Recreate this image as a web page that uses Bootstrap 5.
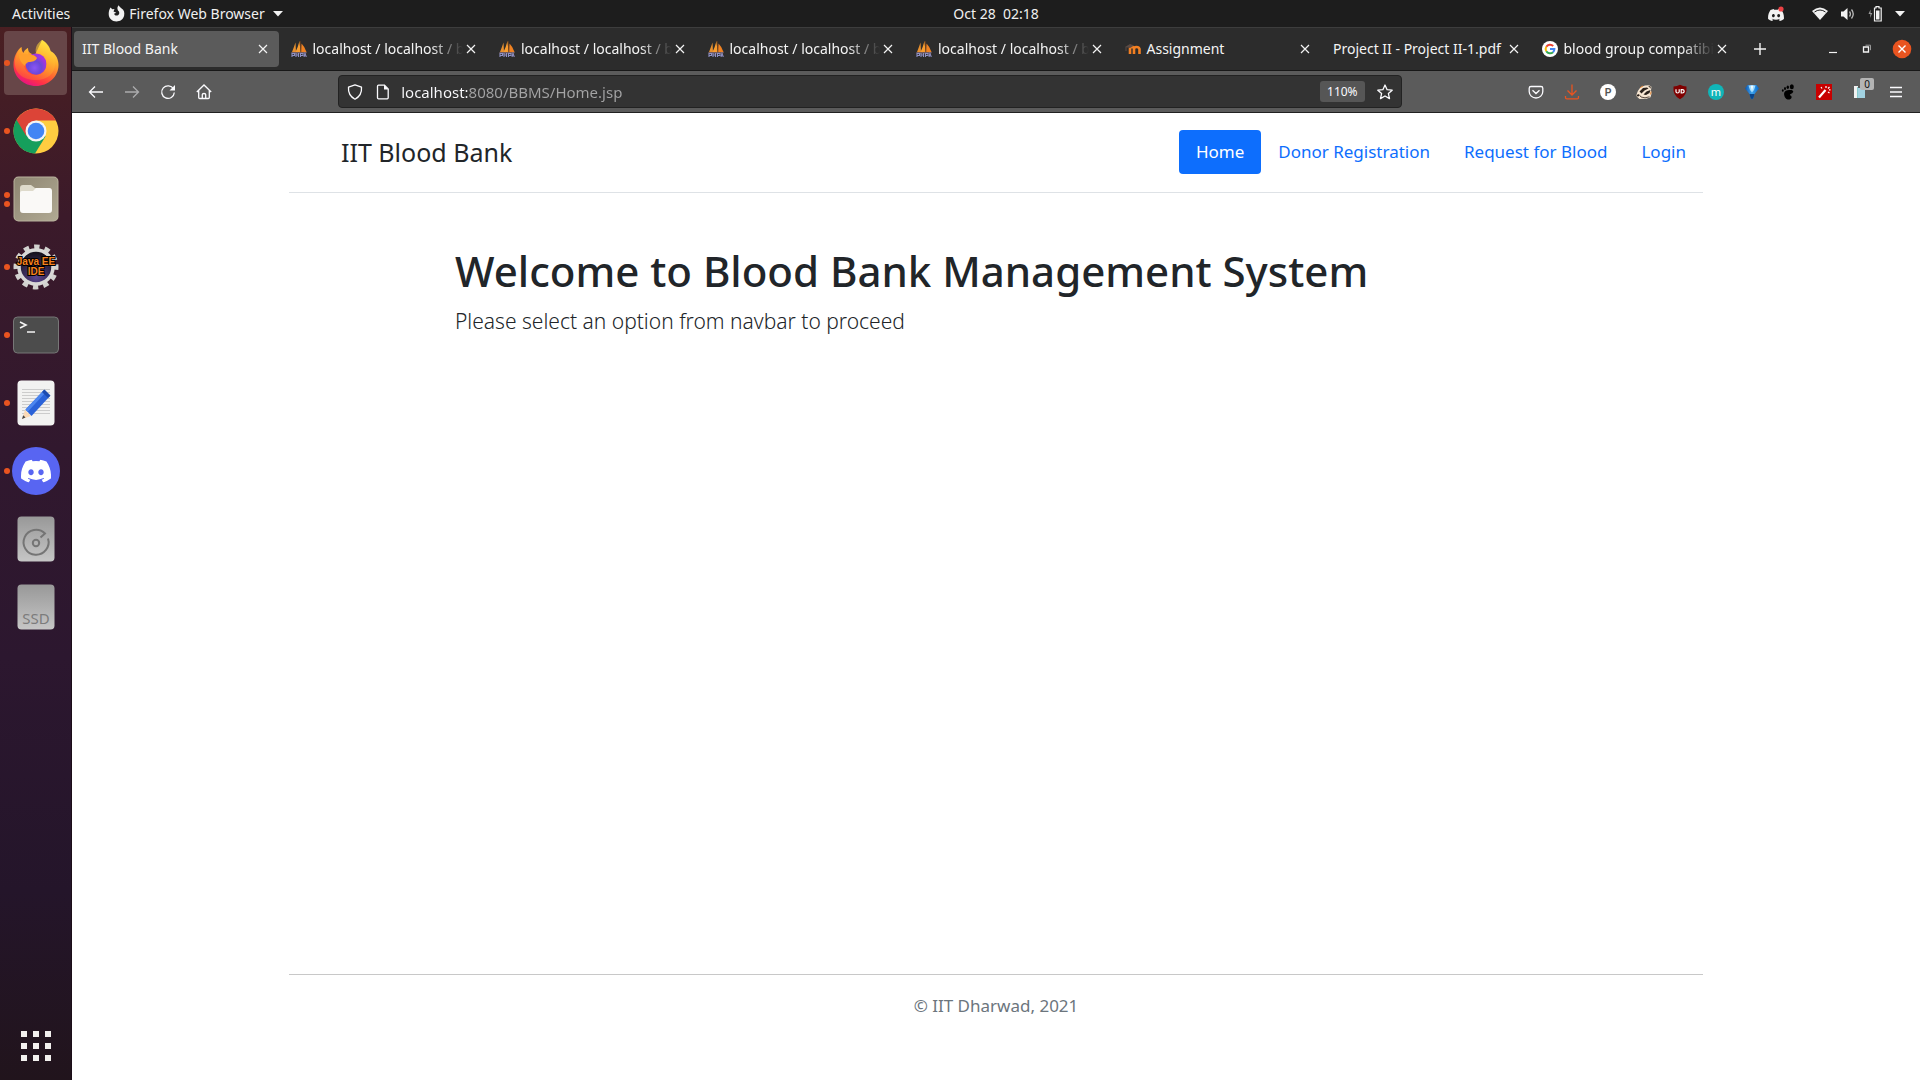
<!DOCTYPE html>
<html lang="en">
<head>
<meta charset="utf-8">
<meta name="viewport" content="width=device-width, initial-scale=1">
<title>IIT Blood Bank</title>
<link href="https://cdn.jsdelivr.net/npm/bootstrap@5.3.0/dist/css/bootstrap.min.css" rel="stylesheet">
<style>
:root { --ui-font: "Noto Sans", "Open Sans", sans-serif; }
body { font-family: var(--ui-font); color: #212529; background: #fff; }
button { font-family: inherit; }
svg { display: block; flex: none; }
.plain { background: none; border: 0; padding: 0; color: inherit; }

/* system bar */
.sysbar { height: 27px; background: #1d1d1d; color: #f0f0f0; font-size: 14px; line-height: 20px; }
.sys-left { flex: 1 0 87px; padding-left: 12px; gap: 38px; }
.sys-right { flex: 1 0 0; padding-right: 15px; gap: 13px; }
.tray-app { margin-right: 14px; }

/* dock */
.dock { width: 72px; padding: 4px 4px 2px; gap: 4px; border-right: 1px solid #1b0d18;
  background: linear-gradient(#4a1f22 0, #3b1a2a 18%, #31182e 40%, #2c172f 60%, #24152a 82%, #21141c 100%); }
.dock-item { height: 64px; border-radius: 4px; position: relative; display: flex; align-items: center; justify-content: center; }
.dock-item.current { background: #674648; }
.run-dots { position: absolute; left: 0; top: 0; height: 100%; display: flex; flex-direction: column; justify-content: center; gap: 3px; }
.run-dots i { width: 6px; height: 6px; border-radius: 50%; background: #e95420; }

/* browser chrome */
.tabstrip { height: 44px; background: #2c2c2c; border-top: 1px solid #3d3d3d; border-bottom: 1px solid #181818; color: #f4f4f4; }
.tab-box { flex: 1 1 0; min-width: 0; height: 36px; margin: 3px 2px 0; padding: 0 10px 0 8px; border-radius: 4px; }
.tab-box.current { background: #5b5b5b; }
.tab-name { flex: 1 1 0; min-width: 0; gap: 6px; font-size: 14px; line-height: 20px; text-align: left; }
.tab-name span { white-space: nowrap; flex: 1 1 0; }
.fades { -webkit-mask-image: linear-gradient(to left, transparent 2px, #000 34px); mask-image: linear-gradient(to left, transparent 2px, #000 34px); }
.win-tools { width: 180px; padding: 0 8px 0 13px; }
.toolbar { height: 42px; background: #5b5b5b; border-bottom: 1px solid #202020; color: #fbfbfe; padding: 0 6px; }
.tool { width: 36px; height: 36px; display: flex; align-items: center; justify-content: center; }
.spring { flex: 1 1 0; }
.address { flex: 9 1 0; height: 33px; background: #333; border: 1px solid #222; border-radius: 4px; padding: 0 8px; }
.address input { flex: 1; min-width: 0; border: 0; outline: 0; padding: 0; margin-left: 11px; font: 15px/20px var(--ui-font);
  background: linear-gradient(90deg, #fbfbfe 67px, #a4a4a5 67px); -webkit-background-clip: text; background-clip: text;
  -webkit-text-fill-color: transparent; }
.page-info { margin-left: 13px; }
.zoom-chip { width: 45px; height: 21px; border-radius: 3px; background: #565656; font-size: 12px; line-height: 21px; text-align: center; margin-right: 12px; }
.count-tag { position: absolute; left: 18px; top: 4px; width: 14px; height: 12px; background: #b4b4b4; color: #111; font-size: 10px; line-height: 12px; border-radius: 2px; text-align: center; }

/* page */
.site { width: 100%; max-width: 1414px; font-size: 17px; line-height: 26px; }
.site-head { padding: 17px 0 18px; border-bottom: 1px solid #dee2e6; }
.brand { font-size: 25px; line-height: 32px; margin-left: 52px; }
.site-head .nav-link { padding: 9px 17px; border-radius: 4px; }
.hero { padding: 51px 166px 0; }
.hero h1 { font-size: 42px; line-height: 53px; margin-bottom: 8px; font-weight: 500; }
.hero p { font-size: 21px; line-height: 33px; font-weight: 300; }
.site-foot { border-top: 1px solid #c8c8c8; padding-top: 18px; height: 106px; }
</style>
<script src="https://cdn.jsdelivr.net/npm/bootstrap@5.3.0/dist/js/bootstrap.bundle.min.js"></script>
</head>
<body>
<svg width="0" height="0" class="position-absolute" aria-hidden="true">
  <defs>
    <symbol id="x" viewBox="0 0 12 12"><path d="M2 2l8 8M10 2l-8 8" stroke="currentColor" stroke-width="1.2" fill="none"/></symbol>
    <symbol id="pma" viewBox="0 0 16 16">
      <path d="M1 11Q3 6 4.500 1.500L5 11z" fill="#e8902e"/><path d="M4.500 11Q7 6 8.500 0L9.500 11z" fill="#f89c2e"/><path d="M10.500 2.500Q14 6 15.500 11L10 11z" fill="#f08222"/><path d="M9 0l1 11" stroke="#8a4a18" stroke-width=".7"/>
      <path d="M0 11.200h16l-1 1.200H1z" fill="#8a6d70"/><path d="M1 16v-3.500h2.500v2H1M5 12v4M5 14h2.500M7.500 12v4M9.500 16v-3.500h2.500v2H9.500M13 16l1-3.500 1.300 3.500" stroke="#8f90c4" stroke-width="1.100" fill="none"/>
    </symbol>
    <linearGradient id="ffBody" x1=".8" y1="0" x2=".3" y2="1"><stop offset="0" stop-color="#fff44f"/><stop offset=".35" stop-color="#ffb02e"/><stop offset=".6" stop-color="#ff6a30"/><stop offset=".82" stop-color="#ff3048"/><stop offset="1" stop-color="#e3108a"/></linearGradient>
    <linearGradient id="ffSwirl" x1=".6" y1="0" x2=".2" y2="1"><stop offset="0" stop-color="#ffe03a"/><stop offset=".6" stop-color="#ffa12b"/><stop offset="1" stop-color="#ff5a36"/></linearGradient>
    <radialGradient id="ffGlobe" cx=".4" cy=".65" r=".7"><stop offset="0" stop-color="#8a55f5"/><stop offset=".5" stop-color="#6a48d8"/><stop offset="1" stop-color="#b030e0"/></radialGradient>
    <linearGradient id="filesBg" x1="0" y1="0" x2="1" y2="1"><stop offset="0" stop-color="#8e8672"/><stop offset="1" stop-color="#b0a993"/></linearGradient>
    <linearGradient id="driveBg" x1="0" y1="0" x2="0" y2="1"><stop offset="0" stop-color="#989898"/><stop offset="1" stop-color="#c6c6c6"/></linearGradient>
    <radialGradient id="eclipse" cx=".5" cy=".8" r=".7"><stop offset="0" stop-color="#5a4590"/><stop offset="1" stop-color="#17131f"/></radialGradient>
    <linearGradient id="gem" x1="0" y1="0" x2="1" y2="0"><stop offset="0" stop-color="#0b55b0"/><stop offset=".5" stop-color="#3fa4ee"/><stop offset="1" stop-color="#0767c9"/></linearGradient>
    <symbol id="discordFace" viewBox="0 0 127 96"><path fill="currentColor" fill-rule="evenodd" d="M107.700 8.070A105.150 105.150 0 0 0 81.470 0a72.060 72.060 0 0 0-3.360 6.830 97.680 97.680 0 0 0-29.110 0A72.370 72.370 0 0 0 45.640 0a105.890 105.890 0 0 0-26.250 8.090C2.790 32.650-1.710 56.600.54 80.210a105.730 105.730 0 0 0 32.170 16.150 77.700 77.700 0 0 0 6.890-11.110 68.420 68.420 0 0 1-10.850-5.180c.91-.66 1.800-1.340 2.660-2a75.570 75.570 0 0 0 64.320 0c.87.710 1.760 1.390 2.660 2a68.680 68.680 0 0 1-10.870 5.190 77 77 0 0 0 6.890 11.100 105.250 105.250 0 0 0 32.190-16.140c2.640-27.380-4.510-51.110-18.900-72.150zM42.450 65.690C36.180 65.690 31 60 31 53s5-12.740 11.430-12.740S54 46 53.890 53s-5.050 12.690-11.440 12.690zm42.240 0C78.410 65.690 73.250 60 73.250 53s5-12.740 11.440-12.740S96.230 46 96.120 53s-5.040 12.690-11.430 12.690z"/></symbol>
  </defs>
</svg>

<div class="d-flex flex-column min-vh-100">
  <header class="sysbar d-flex align-items-center">
    <div class="sys-left d-flex align-items-center">
      <button class="plain">Activities</button>
      <button class="plain d-flex align-items-center">
        <svg width="17" height="17" viewBox="0 0 17 17" class="me-1"><path fill="#f2f2f2" d="M2.500 2.500l1.800 1.800L6.500 4 5.500 6.500 8.300 7.800 6 8.700c.8 1.800 2.500 2.300 4 1.500 1.800-1 1.700-3.600 0-4.700C9 3.600 9.200 1.800 10.700.3c.6 1.600 1.800 2.200 2.900 3.300 2.500 1.200 3.200 4.500 2.500 7.200C15.200 14.500 12 16.500 8.500 16.500 4 16.500.7 13.200.7 9c0-2.500.6-4.800 1.800-6.500z"/></svg>
        <span>Firefox Web Browser</span>
        <svg width="10" height="6" viewBox="0 0 10 6" class="ms-2"><path d="M0 0h10L5 5.500z" fill="#f2f2f2"/></svg>
      </button>
    </div>
    <button class="plain">Oct 28 &nbsp;02:18</button>
    <div class="sys-right d-flex align-items-center justify-content-end">
      <svg width="18" height="16" viewBox="0 0 18 16" color="#f2f2f2" class="tray-app"><use href="#discordFace" x="1" y="3" width="16" height="12"/><circle cx="14" cy="3" r="2.600" fill="#ed4245"/></svg>
      <svg width="16" height="14" viewBox="0 0 16 14"><path d="M0 4Q8-3 16 4L8 13z" fill="#f2f2f2"/><path d="M2.500 5Q8 1 13.500 5" stroke="#1d1d1d" stroke-width="1" fill="none"/></svg>
      <svg width="14" height="14" viewBox="0 0 14 14"><path d="M0 4.500h2.500L6.500 1v12L2.500 9.500H0z" fill="#f2f2f2"/><path d="M8.500 4.500q1.800 2.500 0 5M10.500 2.500q3.500 4.500 0 9" stroke="#bbb" stroke-width="1.300" fill="none"/></svg>
      <svg width="14" height="16" viewBox="0 0 14 16"><path d="M2.500 3.500L.5 8h2L2 12l2.300-5H2.500z" fill="#999"/><path d="M6.500 2H8V.7h3V2h2.200v13H6.500z" fill="none" stroke="#f2f2f2" stroke-width="1.200"/><path d="M8 4.500h3.500v9H8z" fill="#f2f2f2"/></svg>
      <svg width="10" height="6" viewBox="0 0 10 6"><path d="M0 0h10L5 5.500z" fill="#f2f2f2"/></svg>
    </div>
  </header>

  <div class="d-flex flex-grow-1">
    <nav class="dock d-flex flex-column flex-shrink-0" aria-label="Dock">
      <button class="plain dock-item current" aria-label="Firefox"><span class="run-dots"><i></i></span>
        <svg width="46" height="46" viewBox="0 0 46 46"><path fill="url(#ffBody)" d="M29 0c5 3 8 8 8.500 11 6 3 8 9 8 14C45.500 37 35 46 23 46S.5 37 .5 25C.5 17 4 10 8.500 7c0 3 1 5 2 6 1-3 3-4 4.500-5 0 3 1 5 4 6l2 3z"/><circle cx="23" cy="24" r="10.500" fill="url(#ffGlobe)"/><path fill="url(#ffSwirl)" d="M29 0c-6 4-7 9-6 13 5 0 10 3 11 6l-2-1c4 8-1 17-9 17-7 0-12-5-12-11 3-1 7-1 10-3l3-2c-3-2-6-1-8-3-1-2-1-5-1-8-2 1-4 3-4.500 5-2-1-2.500-4-2-6-4 4-6 9-6.500 14C1 33 10 40 23 40c12 0 19-7 19-16 0-5-2-8-4.500-13C37 6 33 2 29 0z" opacity=".55"/><circle cx="23.500" cy="25" r="9.500" fill="url(#ffGlobe)"/><path d="M6 15c5-2 9 0 13 0 3 0 4 2 5 3-1 3-5 4-8 4-2 0-4 2-4 4C8 23 6 19 6 15z" fill="#ffa02c"/></svg></button>
      <button class="plain dock-item" aria-label="Chrome"><span class="run-dots"><i></i></span>
        <svg width="46" height="46" viewBox="0 0 46 46"><circle cx="23" cy="23" r="22.500" fill="#ffcd41"/><path d="M23 23L3.500 11.750A22.500 22.500 0 0 0 22 45.500L32.500 28.500z" fill="#159f5c"/><path d="M23 12.500h19.900A22.500 22.500 0 0 0 3.500 11.750L13.500 28.500 13 20z" fill="#dc4437"/><circle cx="23" cy="23" r="10.500" fill="#f4f4f4"/><circle cx="23" cy="23" r="8.300" fill="#4285f4"/></svg></button>
      <button class="plain dock-item" aria-label="Files"><span class="run-dots"><i></i><i></i></span>
        <svg width="46" height="46" viewBox="0 0 46 46"><rect x=".5" y=".5" width="45" height="45" rx="5" fill="#b9b29d"/><rect x="1.500" y="1.500" width="43" height="43" rx="4" fill="url(#filesBg)"/><path d="M7 12q0-3 3-3h8l4 3h14q2 0 2 3v8H7z" fill="#dedacb"/><path d="M7 17q0-2 2-2h11l3-3h13q3 0 3 3v19q0 3-3 3H10q-3 0-3-3z" fill="#faf9f7"/></svg></button>
      <button class="plain dock-item" aria-label="Eclipse"><span class="run-dots"><i></i></span>
        <svg width="48" height="46" viewBox="0 0 48 46"><circle cx="24" cy="23" r="20" fill="none" stroke="#d2d2cf" stroke-width="5" stroke-dasharray="5.240 5.240" transform="rotate(-7 24 23)"/><circle cx="24" cy="23" r="17" fill="url(#eclipse)" stroke="#d8d8d6" stroke-width="3.500"/><g font-family="Liberation Sans, sans-serif" font-weight="700" font-size="10" text-anchor="middle" fill="#f5821f" stroke="#000" stroke-width="2" paint-order="stroke"><text x="24" y="21">Java EE</text><text x="24" y="31">IDE</text></g></svg></button>
      <button class="plain dock-item" aria-label="Terminal"><span class="run-dots"><i></i></span>
        <svg width="46" height="38" viewBox="0 0 46 38"><rect x=".5" y="1" width="45" height="36" rx="4" fill="#4c4c4c" stroke="#777"/><path d="M7 6l6 3-6 3M14 16h8" stroke="#f4f4f4" stroke-width="1.600" fill="none"/></svg></button>
      <button class="plain dock-item" aria-label="Text editor"><span class="run-dots"><i></i></span>
        <svg width="38" height="46" viewBox="0 0 38 46"><rect x=".5" y=".5" width="37" height="45" rx="4" fill="#f2f2f1"/><path d="M5 9.500h28M5 12.500h28M5 15.500h28M5 18.500h28M5 21.500h28M5 24.500h28M5 27.500h28M5 30.500h28M5 33.500h28" stroke="#ccc"/><path d="M5 39l3-9 6 6z" fill="#fbd9b5"/><path d="M5 39l1.200-3.800 2.300 2.300z" fill="#444"/><path d="M8.500 29.500L27 10l6 6-18.500 20z" fill="#2a62d8"/><path d="M8.500 29.500L27 10l2 2-18.500 20z" fill="#4c86ef"/><path d="M25 12l2.500-2.500 6 6L31 18z" fill="#1c4bb0"/></svg></button>
      <button class="plain dock-item" aria-label="Discord"><span class="run-dots"><i></i></span>
        <svg width="48" height="48" viewBox="0 0 48 48" color="#fff"><circle cx="24" cy="24" r="24" fill="#5865f2"/><use href="#discordFace" x="9" y="12.500" width="30" height="23"/></svg></button>
      <button class="plain dock-item" aria-label="Disk">
        <svg width="38" height="46" viewBox="0 0 38 46"><rect x=".5" y=".5" width="37" height="45" rx="4" fill="url(#driveBg)"/><g fill="none" stroke="#757575" stroke-width="2"><path d="M23.500 21.500L28 17.500A12.500 12.500 0 1 0 31 22.500"/><circle cx="19" cy="27" r="3.200"/></g></svg></button>
      <button class="plain dock-item" aria-label="Solid state disk">
        <svg width="38" height="46" viewBox="0 0 38 46"><rect x=".5" y=".5" width="37" height="45" rx="4" fill="url(#driveBg)"/><text x="19" y="40" font-family="Noto Sans, sans-serif" font-size="15" text-anchor="middle" fill="#7c7c7c">SSD</text></svg></button>
      <button class="plain dock-item mt-auto" aria-label="Show applications">
        <svg width="30" height="30" viewBox="0 0 30 30" fill="#f2f0ee"><path d="M0 0h6v6H0zM12 0h6v6h-6zM24 0h6v6h-6zM0 12h6v6H0zM12 12h6v6h-6zM24 12h6v6h-6zM0 24h6v6H0zM12 24h6v6h-6zM24 24h6v6h-6z"/></svg></button>
    </nav>

    <div class="d-flex flex-column flex-grow-1">
      <div class="tabstrip d-flex">
        <div class="tab-box current d-flex align-items-center"><button class="plain tab-name d-flex align-items-center"><span>IIT Blood Bank</span></button><button class="plain" aria-label="Close tab"><svg width="12" height="12"><use href="#x"/></svg></button></div>
        <div class="tab-box d-flex align-items-center"><button class="plain tab-name d-flex align-items-center"><svg width="16" height="16"><use href="#pma"/></svg><span class="fades">localhost / localhost / b</span></button><button class="plain" aria-label="Close tab"><svg width="12" height="12"><use href="#x"/></svg></button></div>
        <div class="tab-box d-flex align-items-center"><button class="plain tab-name d-flex align-items-center"><svg width="16" height="16"><use href="#pma"/></svg><span class="fades">localhost / localhost / b</span></button><button class="plain" aria-label="Close tab"><svg width="12" height="12"><use href="#x"/></svg></button></div>
        <div class="tab-box d-flex align-items-center"><button class="plain tab-name d-flex align-items-center"><svg width="16" height="16"><use href="#pma"/></svg><span class="fades">localhost / localhost / b</span></button><button class="plain" aria-label="Close tab"><svg width="12" height="12"><use href="#x"/></svg></button></div>
        <div class="tab-box d-flex align-items-center"><button class="plain tab-name d-flex align-items-center"><svg width="16" height="16"><use href="#pma"/></svg><span class="fades">localhost / localhost / b</span></button><button class="plain" aria-label="Close tab"><svg width="12" height="12"><use href="#x"/></svg></button></div>
        <div class="tab-box d-flex align-items-center"><button class="plain tab-name d-flex align-items-center"><svg width="16" height="16" viewBox="0 0 16 16"><path d="M5 13V7.500M5 8q0-2 2-2t2 2v5M9 8q0-2 2.500-2T14.500 8v5" stroke="#f27f22" stroke-width="2.600" fill="none"/><path d="M0 6l5-3 4 1.500L5 7z" fill="#5a4a44"/><path d="M1 6v4" stroke="#5a4a44"/></svg><span>Assignment</span></button><button class="plain" aria-label="Close tab"><svg width="12" height="12"><use href="#x"/></svg></button></div>
        <div class="tab-box d-flex align-items-center"><button class="plain tab-name d-flex align-items-center"><span>Project II - Project II-1.pdf</span></button><button class="plain" aria-label="Close tab"><svg width="12" height="12"><use href="#x"/></svg></button></div>
        <div class="tab-box d-flex align-items-center"><button class="plain tab-name d-flex align-items-center"><svg width="16" height="16" viewBox="0 0 16 16"><circle cx="8" cy="8" r="8" fill="#fff"/><g fill="none" stroke-width="2"><path d="M4.300 5.700A4.400 4.400 0 0 1 11.200 5" stroke="#ea4335"/><path d="M4.300 5.700a4.400 4.400 0 0 0 0 4.600" stroke="#fbbc05"/><path d="M4.300 10.300a4.400 4.400 0 0 0 6.700.9" stroke="#34a853"/><path d="M8 8h4.400a4.400 4.400 0 0 1-1.400 3.200" stroke="#4285f4"/></g></svg><span class="fades">blood group compatibi</span></button><button class="plain" aria-label="Close tab"><svg width="12" height="12"><use href="#x"/></svg></button></div>
        <div class="win-tools d-flex align-items-center">
          <button class="plain" aria-label="New tab"><svg width="14" height="14" viewBox="0 0 14 14"><path d="M7 1v12M1 7h12" stroke="#f4f4f4" stroke-width="1.400"/></svg></button>
          <button class="plain ms-auto me-4" aria-label="Minimize"><svg width="10" height="10" viewBox="0 0 10 10"><path d="M1 8.500h8" stroke="#f4f4f4" stroke-width="1.200"/></svg></button>
          <button class="plain me-3" aria-label="Restore"><svg width="10" height="10" viewBox="0 0 10 10"><path d="M1.500 3h5v5h-5z" fill="none" stroke="#f4f4f4" stroke-width="1.300"/><path d="M3.500 1.200h5v5" fill="none" stroke="#999"/></svg></button>
          <button class="plain ms-1" aria-label="Close window"><svg width="20" height="20" viewBox="0 0 20 20"><circle cx="10" cy="10" r="9.300" fill="#e95420"/><path d="M6.500 6.500l7 7M13.500 6.500l-7 7" stroke="#fff" stroke-width="1.400"/></svg></button>
        </div>
      </div>

      <div class="toolbar d-flex align-items-center">
        <button class="plain tool" aria-label="Back"><svg width="16" height="16" viewBox="0 0 16 16"><path d="M15 8H1.500M7 2.500L1.500 8 7 13.500" stroke="currentColor" stroke-width="1.300" fill="none"/></svg></button>
        <button class="plain tool opacity-50" aria-label="Forward"><svg width="16" height="16" viewBox="0 0 16 16"><path d="M1 8h13.500M9 2.500L14.500 8 9 13.500" stroke="currentColor" stroke-width="1.300" fill="none"/></svg></button>
        <button class="plain tool" aria-label="Reload"><svg width="16" height="16" viewBox="0 0 16 16"><path d="M13.500 5A6.300 6.300 0 1 0 14.300 8.500" stroke="currentColor" stroke-width="1.300" fill="none"/><path d="M15 1v5.500H9.500z" fill="currentColor"/></svg></button>
        <button class="plain tool" aria-label="Home"><svg width="16" height="16" viewBox="0 0 16 16"><path d="M.8 8L8 1l7.200 7M2.700 6.500v7q0 1 1 1h8.600q1 0 1-1v-7M6.300 14.500v-4q0-1 1.700-1t1.700 1v4" stroke="currentColor" stroke-width="1.300" fill="none"/></svg></button>
        <div class="spring"></div>
        <div class="address d-flex align-items-center">
          <svg width="16" height="16" viewBox="0 0 16 16"><path d="M8 .8l6.500 2.400q.7 8-6.500 12Q.8 11.200 1.500 3.200z" stroke="#fbfbfe" stroke-width="1.300" fill="none" stroke-linejoin="round"/></svg>
          <svg width="14" height="16" viewBox="0 0 14 16" class="page-info"><path d="M2.500 1.200h6l3.700 3.700v8.900q0 1-1 1h-8.700q-1 0-1-1V2.200q0-1 1-1z" stroke="#fbfbfe" stroke-width="1.300" fill="none"/><path d="M8 1v4.500h4.500z" fill="#fbfbfe"/></svg>
          <input type="text" aria-label="Address" value="localhost:8080/BBMS/Home.jsp">
          <button class="plain zoom-chip">110%</button>
          <button class="plain" aria-label="Bookmark"><svg width="16" height="16" viewBox="0 0 16 16"><path d="M8 1l2.100 4.700 5.100.5-3.800 3.400 1.100 5L8 12l-4.500 2.600 1.100-5L.8 6.200l5.100-.5z" stroke="#fbfbfe" stroke-width="1.300" fill="none" stroke-linejoin="round"/></svg></button>
        </div>
        <div class="spring"></div>
        <button class="plain tool" aria-label="Pocket"><svg width="16" height="16" viewBox="0 0 16 16"><path d="M3 2.500h10q1.800 0 1.800 1.800V7.500a6.800 6.500 0 0 1-13.600 0V4.300Q1.200 2.500 3 2.500zM4.500 6.200L8 9.500l3.500-3.300" stroke="currentColor" stroke-width="1.300" fill="none"/></svg></button>
        <button class="plain tool" aria-label="Downloads"><svg width="16" height="16" viewBox="0 0 16 16"><path d="M8 .5v10.500M3.500 6.500L8 11l4.500-4.500M1.500 12v1.500q0 1.300 1.300 1.300h10.400q1.300 0 1.300-1.300V12" stroke="#e95420" stroke-width="1.300" fill="none"/></svg></button>
        <button class="plain tool" aria-label="P extension"><svg width="16" height="16" viewBox="0 0 16 16"><circle cx="8" cy="8" r="8" fill="#fff"/><text x="8" y="11.500" font-family="Liberation Sans, sans-serif" font-weight="700" font-size="10" text-anchor="middle" fill="#555">P</text></svg></button>
        <button class="plain tool" aria-label="Privacy Badger"><svg width="16" height="16" viewBox="0 0 16 16"><path d="M.2 12Q1.500 6 5 3l4-1.500 4-.3 2.500 1.500-.5 3.500.5 3.500-1 3.500-4 1.500-7 .3z" fill="#f7e6d2"/><path d="M3.500 7.500L7 4l4-.5 1.500 1-4 2L5.500 9.500z" fill="#2a211b"/><path d="M7.500 10.500l3-3 4-1.500-1 3-3.500 2z" fill="#2a211b"/><path d="M12 1.800l2.500.8.300 2.200z" fill="#2a211b"/><path d="M.5 12l2.500-1.500 2 2.500 4 .8 4.500-1" stroke="#4a3a30" stroke-width=".9" fill="none"/><circle cx="2" cy="11.500" r="1.100" fill="#2a211b"/><path d="M4 3.800l3-1.800M14.500 10.500l.6-3" stroke="#e88a3a"/></svg></button>
        <button class="plain tool" aria-label="uBlock Origin"><svg width="16" height="16" viewBox="0 0 16 16"><path d="M8 .8q3 1.700 6.500 1.700 1 9-6.500 12.700Q.5 11.500 1.500 2.500 5 2.500 8 .8z" fill="#800000"/><path d="M4 5.300v2.500q0 1.200 1.600 1.200T7.200 7.800V5.300" fill="none" stroke="#fff" stroke-width="1.200"/><path d="M9.200 5.600h1q2 0 2 1.700t-2 1.700h-1z" fill="none" stroke="#fff" stroke-width="1.200"/></svg></button>
        <button class="plain tool" aria-label="m extension"><svg width="16" height="16" viewBox="0 0 16 16"><circle cx="8" cy="8" r="8" fill="#10b5b8"/><text x="8" y="11.500" font-family="Noto Sans, sans-serif" font-size="11" text-anchor="middle" fill="#fff">m</text></svg></button>
        <button class="plain tool" aria-label="Gem extension"><svg width="16" height="16" viewBox="0 0 16 16"><path d="M3.500 1h9L15 4.500l-4.500 5.500-1 4L8 15.500 6.500 14l-1-4L1 4.500z" fill="url(#gem)"/><path d="M4.500 1.500h7L10 6 8 8.500 6 6z" fill="#9fdcff"/><path d="M6.500 1.500h3L8 7z" fill="#eefaff"/><path d="M5.500 10h5l-1 4L8 15.500 6.500 14z" fill="#0a4488"/></svg></button>
        <button class="plain tool" aria-label="GNOME integration"><svg width="16" height="16" viewBox="0 0 16 16"><ellipse cx="11.800" cy="2.700" rx="2" ry="2.500"/><ellipse cx="7.800" cy="3.200" rx="1.200" ry="1.800"/><ellipse cx="5" cy="4.600" rx="1" ry="1.500"/><ellipse cx="2.800" cy="6.500" rx=".9" ry="1.300"/><path d="M7.500 6.300c4-1 6.500 0 5.500 2s-3.500 1.500-3 2.700 2 .5 1.500 2.700-4.500 2.500-6 .3S2.500 7.500 7.500 6.300z"/></svg></button>
        <button class="plain tool" aria-label="Wand extension"><svg width="16" height="16" viewBox="0 0 16 16"><path d="M0 0h16v16H0z" fill="#c80000"/><path d="M3 13.500L9.500 6" stroke="#fff" stroke-width="2.200"/><path d="M10 2v2M13.500 3l-1.500 1.500M12 8l1.500 1M5 3l1 1.500M13 5.800h1.500" stroke="#fff" stroke-width="1.200"/></svg></button>
        <button class="plain tool position-relative" aria-label="Notes"><svg width="16" height="16" viewBox="0 0 16 16"><path d="M2 2h4v12H2z" fill="#f2f2f2"/><path d="M6 4h7v10H6z" fill="#a2d3e2"/><path d="M5.500 3v11" stroke="#8cc"/></svg><span class="count-tag">0</span></button>
        <button class="plain tool" aria-label="Menu"><svg width="16" height="16" viewBox="0 0 16 16"><path d="M2 3.500h12M2 8h12M2 12.500h12" stroke="currentColor" stroke-width="1.300"/></svg></button>
      </div>

      <div class="site d-flex flex-column flex-grow-1 mx-auto">
        <header class="site-head d-flex align-items-center justify-content-between">
          <a href="#" class="brand text-dark text-decoration-none">IIT Blood Bank</a>
          <ul class="nav nav-pills">
            <li class="nav-item"><a href="#" class="nav-link active" aria-current="page">Home</a></li>
            <li class="nav-item"><a href="#" class="nav-link">Donor Registration</a></li>
            <li class="nav-item"><a href="#" class="nav-link">Request for Blood</a></li>
            <li class="nav-item"><a href="#" class="nav-link">Login</a></li>
          </ul>
        </header>
        <main class="hero flex-grow-1">
          <h1>Welcome to Blood Bank Management System</h1>
          <p>Please select an option from navbar to proceed</p>
        </main>
        <footer class="site-foot text-center text-secondary">© IIT Dharwad, 2021</footer>
      </div>
    </div>
  </div>
</div>
</body>
</html>
